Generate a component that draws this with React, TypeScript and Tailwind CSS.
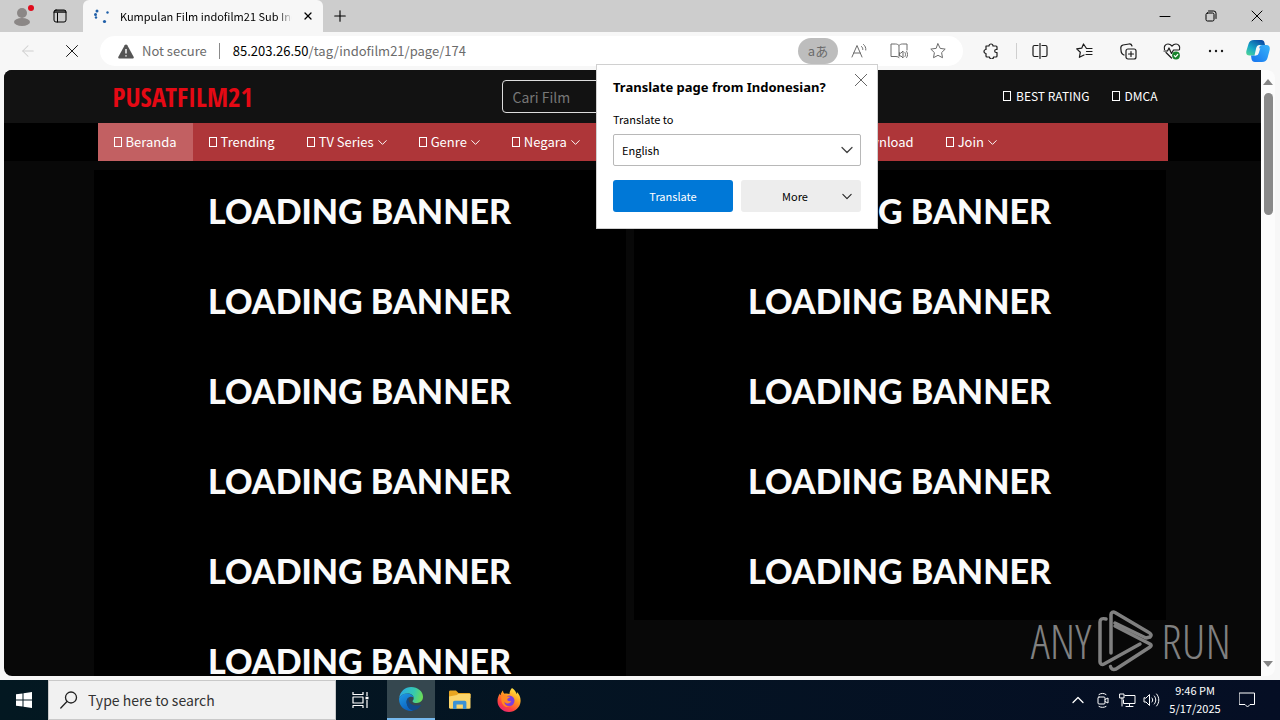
import React from "react";
import { Plus, X, ArrowLeft } from "lucide-react";

const stroke = { fill: "none", stroke: "currentColor", strokeLinecap: "round" as const, strokeLinejoin: "round" as const };

function Glyph() {
  return <span className="inline-block h-[10px] w-2 border border-current" />;
}

function Chevron({ className }: { className: string }) {
  return (
    <svg viewBox="0 0 12 8" className={className} {...stroke} strokeWidth="1.300">
      <path d="M1 1.500l5 5 5-5" />
    </svg>
  );
}

function BrowserTabs() {
  return (
    <div className="flex h-8 shrink-0 bg-[#cdcdcd] text-black">
      <div className="flex w-[83px] items-center gap-[18px] rounded-br-md pl-[13px]">
        <button aria-label="Profile" className="relative h-6 w-[22px]">
          <svg viewBox="0 0 22 24" className="h-6 w-[22px]">
            <circle cx="9" cy="9" r="5" fill="#8b8786" />
            <ellipse cx="9" cy="18" rx="8" ry="4" fill="#8b8786" />
            <circle cx="18" cy="4" r="3" fill="#e00b1c" />
          </svg>
        </button>
        <button aria-label="Tab actions">
          <svg viewBox="0 0 14 14" className="h-[14px] w-[14px]" {...stroke}>
            <rect x="1" y="1" width="12" height="12" rx="2" />
            <path d="M1 3.2h12M1.5 2h11M4.5 4v9" />
          </svg>
        </button>
      </div>
      <div className="flex w-[240px] items-center rounded-t-md bg-[#f7f7f7] pl-[10px] pr-[9px]">
        <svg viewBox="0 0 16 16" className="mr-[11px] h-4 w-4 shrink-0" fill="#1f5fa8">
          <circle cx="4" cy="3" r="1.5" />
          <circle cx="2.500" cy="6.500" r="1.500" />
          <circle cx="3" cy="9.500" r="1.200" />
          <circle cx="14.500" cy="4.500" r="1.200" />
          <circle cx="11.500" cy="13.500" r="1.600" />
        </svg>
        <span className="flex-1 overflow-hidden whitespace-nowrap bg-gradient-to-r from-black from-90% to-[#f7f7f7] bg-clip-text text-[11px] text-transparent">
          Kumpulan Film indofilm21 Sub Indo
        </span>
        <button aria-label="Close tab" className="ml-[10px]">
          <X className="h-3 w-3" strokeWidth={2.6} />
        </button>
      </div>
      <button aria-label="New tab" className="ml-2">
        <Plus className="h-[18px] w-[18px]" strokeWidth={1.5} />
      </button>
      <div className="ml-auto flex items-center gap-[34px] pr-[17px]">
        <button aria-label="Minimize">
          <svg viewBox="0 0 12 12" className="h-3 w-3" {...stroke}>
            <path d="M1 6.500h10" />
          </svg>
        </button>
        <button aria-label="Restore">
          <svg viewBox="0 0 12 12" className="h-3 w-3" {...stroke}>
            <rect x="1" y="3" width="8" height="8" rx="1.5" />
            <path d="M3.500 1h5.200a2.300 2.300 0 0 1 2.300 2.300v5.200" />
          </svg>
        </button>
        <button aria-label="Close">
          <svg viewBox="0 0 12 12" className="h-3 w-3" {...stroke}>
            <path d="M1 1l10 10M11 1L1 11" />
          </svg>
        </button>
      </div>
    </div>
  );
}

function CopilotIcon() {
  return (
    <svg viewBox="0 0 24 24" className="h-6 w-6">
      <defs>
        <linearGradient id="cp-a" x1="0" y1="1" x2="0.7" y2="0">
          <stop offset="0" stopColor="#55d98f" />
          <stop offset="0.45" stopColor="#18a9c8" />
          <stop offset="1" stopColor="#0a4fa6" />
        </linearGradient>
        <linearGradient id="cp-b" x1="0" y1="1" x2="1" y2="0">
          <stop offset="0" stopColor="#1672ee" />
          <stop offset="1" stopColor="#38b5fa" />
        </linearGradient>
      </defs>
      <path d="M8 1h7.500c1.700 0 2.500 1 3 2.700L19 6h-3c-1.500 0-2.300.8-2.800 2.500L11.500 14c-.5 1.700-1.300 2.500-3 2.500H3.500C.5 16.500-.3 14.500.5 11.500L2.500 5C3.300 2.300 5 1 8 1z" fill="url(#cp-a)" />
      <path d="M16 23H9c-2 0-3-1-3.500-3L5 16.500h3.500c1.700 0 2.500-.8 3-2.500l1.700-5.500C13.700 6.800 14.500 6 16 6h4.500c3 0 3.800 2.500 3 5.500L21.500 19c-.8 2.700-2.500 4-5.500 4z" fill="url(#cp-b)" />
      <path d="M10.200 9c.6-2 1.500-3 3.500-3H16c-1.500 0-2.300.8-2.800 2.500l-.2 1L14.300 9l-1.500 5c-.5 1.700-1.500 2.500-3.300 2.500h-1z" fill="#f7f7f7" />
    </svg>
  );
}

function TranslatePopup() {
  return (
    <div className="absolute right-[402px] top-8 z-10 h-[165px] w-[282px] border border-[#d0d0d0] bg-white px-4 text-[11px] text-black">
      <button aria-label="Close translate" className="absolute right-[10px] top-[9px]">
        <svg viewBox="0 0 12 12" className="h-3 w-3 text-[#555]" {...stroke} strokeWidth="0.9">
          <path d="M0 0l12 12M12 0L0 12" />
        </svg>
      </button>
      <h2 className="mt-3 font-['Noto_Sans',sans-serif] text-[13px] font-bold leading-5">Translate page from Indonesian?</h2>
      <label htmlFor="lang" className="mt-[14px] block leading-4">Translate to</label>
      <div className="relative mt-[7px]">
        <select id="lang" className="h-8 w-full appearance-none rounded-[2px] border border-[#b8b8b8] bg-white px-2">
          <option>English</option>
        </select>
        <Chevron className="pointer-events-none absolute right-2 top-3 h-2 w-3 text-[#444]" />
      </div>
      <div className="mt-[14px] grid grid-cols-2 gap-2">
        <button className="h-8 rounded-[3px] bg-[#0078d7] text-white">Translate</button>
        <button className="relative h-8 rounded-[3px] bg-[#ededed] pr-3">
          More
          <Chevron className="absolute right-[9px] top-[13px] h-[7px] w-[10px] text-[#222]" />
        </button>
      </div>
    </div>
  );
}

function Toolbar() {
  return (
    <div className="relative flex h-[38px] shrink-0 items-center bg-[#f7f7f7] text-[#1b1b1b]">
      <button aria-label="Back" className="ml-[19px]">
        <ArrowLeft className="h-[18px] w-[18px] text-[#cfcfcf]" strokeWidth={1.4} />
      </button>
      <button aria-label="Stop" className="ml-7">
        <svg viewBox="0 0 14 14" className="h-[14px] w-[14px]" {...stroke}>
          <path d="M1.500 1.500l11 11M12.500 1.500l-11 11" />
        </svg>
      </button>
      <div className="ml-[21px] flex h-[30px] flex-1 items-center rounded-full bg-white pl-[18px] pr-[17px] text-[#6b6b6b]">
        <svg viewBox="0 0 16 15" className="h-[15px] w-4">
          <path d="M8 .5c.6 0 1 .3 1.300.8l6.300 11.400c.5 1-.1 1.800-1.200 1.800H1.600c-1.100 0-1.700-.8-1.200-1.800L6.700 1.300C7 .8 7.400.5 8 .5z" fill="#555" />
          <path d="M8 5v4.500M8 11.200v1.300" stroke="#fff" strokeWidth="1.400" />
        </svg>
        <span className="ml-2 text-[13px]">Not secure</span>
        <span className="ml-3 mr-[13px] h-4 w-px bg-[#8a8a8a]" />
        <div role="textbox" aria-label="Address" className="flex-1 text-[13px]">
          <span className="text-black">85.203.26.50</span>/tag/indofilm21/page/174
        </div>
        <button aria-label="Translate" className="flex h-[26px] w-10 items-center justify-center rounded-full bg-[#bdbdbd] pb-[2px] text-[13px] leading-none">
          aあ
        </button>
        <button aria-label="Read aloud" className="ml-[13px]">
          <svg viewBox="0 0 16 16" className="h-4 w-4" {...stroke}>
            <path d="M1 14L6 2.500 11 14M2.700 10h6.600M10.500 3.500c1 .8 1.400 1.800 1.300 3M12.500 1.500c1.700 1.300 2.500 3.200 2.300 5.500" />
          </svg>
        </button>
        <button aria-label="Immersive reader" className="ml-[23px]">
          <svg viewBox="0 0 18 16" className="h-4 w-[18px]" {...stroke}>
            <path d="M9 13V2.500C8 1.500 7 1 5.500 1H1v12.500h5c1.500 0 2.500.5 3 1M9 2.500C10 1.500 11 1 12.500 1H17v6" />
            <path d="M9.500 10v3h1.500l2 2V8l-2 2zM15 9.500c.8 1.200.8 2.800 0 4M16.700 8.500c1.200 1.800 1.200 4.200 0 6" />
          </svg>
        </button>
        <button aria-label="Add favorite" className="ml-[22px]">
          <svg viewBox="0 0 16 16" className="h-4 w-4" {...stroke}>
            <path d="M8 .8l2.200 4.600 5 .7-3.600 3.500.9 5.100L8 12.300l-4.500 2.400.9-5.100L.8 6.100l5-.7z" />
          </svg>
        </button>
      </div>
      <button aria-label="Extensions" className="ml-5">
        <svg viewBox="0 0 16 16" className="h-4 w-4" {...stroke} strokeWidth="1.200">
          <path d="M3 3h3a2 2 0 0 1 4 0h3c.6 0 1 .4 1 1v2.500h-.8a1.500 1.500 0 0 0 0 3h.8V13c0 .6-.4 1-1 1h-2.500a2 2 0 0 1-4 0H4c-.6 0-1-.4-1-1v-2.500a2 2 0 0 1 0-4z" />
        </svg>
      </button>
      <span className="ml-[17px] h-4 w-px bg-[#cfcfcf]" />
      <button aria-label="Split screen" className="ml-[15px]">
        <svg viewBox="0 0 16 16" className="h-4 w-4" {...stroke} strokeWidth="1.200">
          <path d="M6 2.500H2.500a1.500 1.500 0 0 0-1.500 1.500v8a1.500 1.500 0 0 0 1.500 1.500H6M10 2.500h3.500A1.500 1.500 0 0 1 15 4v8a1.500 1.500 0 0 1-1.500 1.500H10M8 .5v15" />
        </svg>
      </button>
      <button aria-label="Favorites" className="ml-7">
        <svg viewBox="0 0 17 16" className="h-4 w-[17px]" {...stroke} strokeWidth="1.200">
          <path d="M16 5.500h-5.500L7.500 1 5.700 5.200l-5 .7 3.600 3.400-.9 5L8 12M10.500 8.500H16M10 11.500h6" />
        </svg>
      </button>
      <button aria-label="Collections" className="ml-[27px]">
        <svg viewBox="0 0 17 17" className="h-[17px] w-[17px]" {...stroke} strokeWidth="1.200">
          <rect x="6" y="6" width="10" height="10" rx="2" />
          <path d="M11 8.500v5M8.500 11h5M4 12l-1-.5C2 11 1.500 10 1.200 9L.8 5C.700 3.500 1.500 2.500 3 2l6-1c1.500-.2 2.600.6 3 2" />
        </svg>
      </button>
      <button aria-label="Browser essentials" className="ml-[26px]">
        <svg viewBox="0 0 18 17" className="h-[17px] w-[18px]" {...stroke} strokeWidth="1.200">
          <path d="M1.500 6.500C.5 3.500 2.500 1 5 1c1.700 0 2.800.7 4 2 1.200-1.300 2.300-2 4-2 2.500 0 4.500 2.500 3.500 5.500M3 9.500L8.500 15M1 8h3.500L6 5l2.500 5.500L10.500 7H16" />
          <circle cx="13" cy="12.500" r="3.900" fill="#16832b" stroke="none" />
          <path d="M11.300 12.600l1.200 1.200 2.200-2.300" stroke="#fff" />
        </svg>
      </button>
      <button aria-label="Settings and more" className="ml-[27px]">
        <svg viewBox="0 0 16 4" className="h-1 w-4" fill="#1b1b1b">
          <circle cx="2" cy="2" r="1.200" />
          <circle cx="8" cy="2" r="1.200" />
          <circle cx="14" cy="2" r="1.200" />
        </svg>
      </button>
      <button aria-label="Copilot" className="ml-[22px] mr-[10px]">
        <CopilotIcon />
      </button>
      <TranslatePopup />
    </div>
  );
}

function NavItem({ label, menu, active }: { label: string; menu?: boolean; active?: boolean }) {
  return (
    <a href="#" className={`flex h-full items-center gap-1 px-4 ${active ? "bg-[#c26062]" : ""}`}>
      <Glyph />
      <span>{label}</span>
      {menu && <Chevron className="h-[7px] w-[9px]" />}
    </a>
  );
}

function Banners({ count }: { count: number }) {
  return (
    <div className="self-start bg-black">
      {Array.from({ length: count }, (_, i) => (
        <div key={i} className="h-[90px] pt-[19px] text-center font-['Lato_Black','Lato',sans-serif] text-[34px] font-black leading-[44px] text-[#fafafa]">
          LOADING BANNER
        </div>
      ))}
    </div>
  );
}

function AnyRunMark() {
  return (
    <div className="absolute bottom-1 right-[30px] flex items-center gap-[7px] font-['Noto_Sans_ExtraCondensed_Light','Open_Sans_Condensed_Light','Noto_Sans_ExtraCondensed','Open_Sans_Condensed','Liberation_Sans',sans-serif] text-[48px] font-light leading-none text-[#808080]">
      <span>ANY</span>
      <svg viewBox="0 0 56 62" className="h-[62px] w-14" {...stroke} strokeWidth="3.500">
        <path d="M13 43V4.500c0-2 2-3 4-2L50 22c3 1.500 4 3.500 2 5l-4 1L17 13" />
        <path d="M8 9c-4-1-6 0-6 3V52c0 2 2 3 4 2l36-20" />
        <path d="M17 16l35 18c1.500 1 1.500 2 0 3L18 59c-3 1-5 0-5.500-2.500" />
      </svg>
      <span>RUN</span>
    </div>
  );
}

function Site() {
  return (
    <div className="flex min-h-0 flex-1 bg-[#f7f7f7] pb-1 pl-1 pr-[5px]">
      <main className="relative min-w-0 flex-1 overflow-hidden rounded-l-lg bg-[#080808] font-['Noto_Sans_CJK_SC',sans-serif] text-[13px] text-white">
        <header className="h-[53px] bg-[#121212]">
          <div className="mx-auto flex h-full max-w-[1070px] items-center pl-[15px] pr-[10px]">
            <a href="#" className="w-[389px] font-['Noto_Sans_ExtraCondensed','Open_Sans_Condensed','Roboto_Condensed','Liberation_Sans',sans-serif] text-[27px] font-bold leading-8 text-[#e50914]">
              PUSATFILM21
            </a>
            <input aria-label="Cari Film" placeholder="Cari Film" className="h-[33px] w-[280px] rounded-[4px] border border-[#dddddd] bg-transparent px-[10px] text-sm placeholder:text-[#777]" />
            <nav className="ml-auto flex gap-[22px] pb-[2px] text-xs">
              <a href="#" className="flex items-center gap-[5px]"><Glyph />BEST RATING</a>
              <a href="#" className="flex items-center gap-[5px]"><Glyph />DMCA</a>
            </nav>
          </div>
        </header>
        <div className="h-[38px] bg-black">
          <nav className="mx-auto flex h-full max-w-[1070px] items-center bg-[#ae3639]">
            <NavItem label="Beranda" active />
            <NavItem label="Trending" />
            <NavItem label="TV Series" menu />
            <NavItem label="Genre" menu />
            <NavItem label="Negara" menu />
            <div className="w-[228px]" />
            <NavItem label="Download" />
            <NavItem label="Join" menu />
          </nav>
        </div>
        <div className="flex justify-center pr-[6px] pt-[9px]">
          <div className="grid w-full max-w-[1072px] grid-cols-2 gap-2">
            <Banners count={6} />
            <Banners count={5} />
          </div>
        </div>
        <AnyRunMark />
      </main>
      <div className="flex w-[14px] flex-col items-center rounded-r-lg bg-[#fcfcfc] py-[9px]">
        <svg viewBox="0 0 10 6" className="h-[6px] w-[10px]" fill="#858585"><path d="M5 0l5 6H0z" /></svg>
        <div className="mt-2 h-[122px] w-[9px] rounded-full bg-[#8a8a8a]" />
        <svg viewBox="0 0 10 6" className="mt-auto h-[6px] w-[10px]" fill="#858585"><path d="M5 6l5-6H0z" /></svg>
      </div>
    </div>
  );
}

function EdgeIcon() {
  return (
    <svg viewBox="0 0 24 24" className="h-6 w-6">
      <defs>
        <linearGradient id="eg-a" x1="0" y1="0.300" x2="1" y2="0.500">
          <stop offset="0" stopColor="#2aa9e8" />
          <stop offset="0.600" stopColor="#35c9b0" />
          <stop offset="1" stopColor="#6bdc55" />
        </linearGradient>
        <linearGradient id="eg-b" x1="0" y1="0" x2="0.500" y2="1">
          <stop offset="0" stopColor="#1f9be6" />
          <stop offset="1" stopColor="#0b62c0" />
        </linearGradient>
      </defs>
      <path d="M.2 11C1 4.500 6 0 12.200 0 18.800 0 24 4.500 24 9.800c0 4-3 6.200-6 6.200-3.200 0-4.500-1-4.500-1.800 0-.7 1.200-1 1.200-3 0-2.600-2.500-4.700-6.200-4.700C4.700 6.500 1.500 8.500.2 11z" fill="url(#eg-a)" />
      <path d="M.1 11.500C1 8.500 4.500 6.400 8.200 6.400c3.400 0 5.800 1.800 6.400 3.800-1-.6-2.500-.8-4-.2C8 11 7 13.500 7.800 17c.9 3.500 3.500 6 6.700 6.700-1 .2-1.700.3-2.500.3C5 24-.5 18.500.1 11.500z" fill="url(#eg-b)" />
      <path d="M10.500 10.200c-2.500 1.200-3.500 4-2.500 7.200 1 3.500 4 6 6.800 6.200 3-.7 5.500-2.500 7-5 .3-.6-.1-.9-.6-.7-1 .5-2.200.7-3.700.7-4.500 0-8-2.600-8-6 0-.9.400-1.800 1-2.400z" fill="#114a8b" />
    </svg>
  );
}

function FolderIcon() {
  return (
    <svg viewBox="0 0 22 20" className="h-5 w-[22px]">
      <path d="M0 2c0-1 .5-1.500 1.500-1.500H7L9.500 3H20c1 0 1.500.5 1.500 1.500V8H0z" fill="#e8a520" />
      <path d="M0 6.500L8 5l1-1h12.500v13.500c0 .8-.4 1.200-1.200 1.200H1.200C.4 18.700 0 18.300 0 17.500z" fill="#fbd56b" />
      <path d="M4 19v-6.500c0-1 .7-1.700 1.700-1.700h10c1 0 1.700.7 1.700 1.700V19h-3.500v-4.500h-6.400V19z" fill="#3c92d4" />
    </svg>
  );
}

function FirefoxIcon() {
  return (
    <svg viewBox="0 0 24 24" className="h-6 w-6">
      <defs>
        <linearGradient id="ff-a" x1="0.800" y1="0" x2="0.200" y2="1">
          <stop offset="0" stopColor="#fff04a" />
          <stop offset="0.400" stopColor="#ff9a1f" />
          <stop offset="0.750" stopColor="#ff4040" />
          <stop offset="1" stopColor="#e0217c" />
        </linearGradient>
      </defs>
      <path d="M15 0c3 2 4 4 4.500 6.200.4-.8.500-1.500.4-2.200C22.500 6.500 24 10 23.500 14c-.6 5.600-5.500 10-11.500 10C5.500 24 .5 19 .5 13c0-3 1-5.500 2.500-7.500L3.500 7C4 5 5 3.500 6 2.500c0 1.500.5 2.500 1.500 3.200 1.800-.5 3.500-.3 5 .3C12.500 3.500 13.500 1.500 15 0z" fill="url(#ff-a)" />
      <circle cx="12.300" cy="12.800" r="5.200" fill="#7a3ee0" />
      <path d="M4.500 8c2-1.500 4.500-1 6 .5l2.500.3c0 1.200-2.500 1.400-2.700 2.500-.3 1.700 2 2.500 4 1.600-1 3-5 3.500-7 .8-.2 2.500 1.500 4.800 5 5-5 1.500-9-3-7.800-10.700z" fill="#ff8a22" />
    </svg>
  );
}

function Taskbar() {
  return (
    <footer className="flex h-10 shrink-0 items-center bg-gradient-to-r from-[#031821] to-[#050e24] text-white">
      <button aria-label="Start" className="flex h-full w-12 items-center justify-center">
        <svg viewBox="0 0 16 16" className="h-4 w-4" fill="#fff">
          <path d="M0 2.300l6.500-.9v6.100H0zM7.500 1.200L16 0v7.500H7.500zM0 8.500h6.500v6.100L0 13.700zM7.500 8.500H16V16l-8.500-1.200z" />
        </svg>
      </button>
      <label className="flex h-full w-72 items-center gap-[10px] border border-[#c9c9c9] bg-[#f1f1f1] pl-[11px] text-[#222]">
        <svg viewBox="0 0 18 18" className="h-[18px] w-[18px]" {...stroke} strokeWidth="1.300">
          <circle cx="11" cy="6.500" r="5.500" />
          <path d="M7 10.500L.8 17" />
        </svg>
        <input aria-label="Search" placeholder="Type here to search" className="min-w-0 flex-1 bg-transparent text-sm placeholder:text-[#333]" />
      </label>
      <button aria-label="Task view" className="flex h-full w-[51px] items-center justify-center pr-[3px]">
        <svg viewBox="0 0 17 16" className="h-4 w-[17px]" {...stroke} strokeLinecap="butt" strokeWidth="1.200">
          <path d="M1 0v2.500h10V0M1 16v-2.500h10V16M1 5h10v6H1zM15 0v4M15 8v8" />
          <path d="M13.500 6h3" strokeWidth="2.500" />
        </svg>
      </button>
      <button aria-label="Microsoft Edge" className="flex h-full w-12 items-center justify-center border-b-2 border-[#76b9ed] bg-[#35474f]">
        <EdgeIcon />
      </button>
      <button aria-label="File Explorer" className="flex h-full w-[50px] items-center justify-center"><FolderIcon /></button>
      <button aria-label="Firefox" className="flex h-full w-12 items-center justify-center"><FirefoxIcon /></button>
      <div className="ml-auto flex h-full items-center">
        <button aria-label="Hidden icons"><Chevron className="h-2 w-3 rotate-180" /></button>
        <svg viewBox="0 0 14 16" className="ml-3 h-4 w-[14px]" {...stroke}>
          <rect x="2" y="5" width="7" height="7" rx="1" />
          <path d="M9 7.500L12 6v5L9 9.500M3 2.500c2-1.500 5-1.500 7 0M3 14.500c2 1.200 5 1.200 7 0" />
        </svg>
        <svg viewBox="0 0 17 16" className="ml-[9px] h-4 w-[17px]" {...stroke}>
          <path d="M6 3.500h10v8H4.500V8M10.500 11.500v3M7 14.500h7M1 2h4v4H1zM3 6v8" />
        </svg>
        <svg viewBox="0 0 17 16" className="ml-[7px] h-4 w-[17px]" {...stroke}>
          <path d="M1 6v4h2l3.500 3.500v-11L3 6zM9 6c1 1.200 1 2.800 0 4M11.300 4c2 2.400 2 5.600 0 8M13.600 2c3 3.500 3 8.500 0 12" />
        </svg>
        <div className="ml-2 w-[54px] pb-[2px] text-center text-[11px] leading-[18px]">
          <div>9:46 PM</div>
          <div>5/17/2025</div>
        </div>
        <button aria-label="Notifications" className="ml-[17px] mr-[25px]">
          <svg viewBox="0 0 16 16" className="h-4 w-4" {...stroke}>
            <path d="M.5 1h15v11.500H11L8.500 15 6 12.500H.5z" />
          </svg>
        </button>
      </div>
    </footer>
  );
}

export default function App() {
  return (
    <div className="flex h-screen w-full flex-col overflow-hidden bg-[#f7f7f7] font-['Noto_Sans_CJK_SC',sans-serif]">
      <BrowserTabs />
      <Toolbar />
      <Site />
      <Taskbar />
    </div>
  );
}
